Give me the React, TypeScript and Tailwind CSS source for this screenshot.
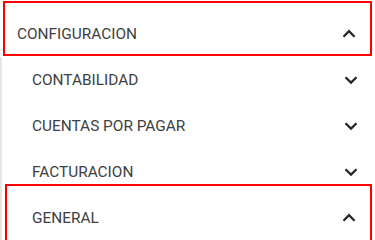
import React from "react";

const Chevron = ({ up }: { up?: boolean }) => (
  <svg width="24" height="24" viewBox="0 0 24 24" className="shrink-0" fill="#262626">
    {up ? (
      <path d="M12 7.6l-6.3 6.3 1.6 1.6 4.7-4.7 4.7 4.7 1.6-1.6z" />
    ) : (
      <path d="M16.7 8.4L12 13.1 7.3 8.4 5.7 10l6.3 6.3 6.3-6.3z" />
    )}
  </svg>
);

export default function App() {
  return (
    <div
      className="w-[375px] h-[240px] overflow-hidden bg-white text-[15.4px] leading-[20px] text-[#404040]"
      style={{ fontFamily: "Roboto, 'Liberation Sans', sans-serif" }}
    >
      <div className="mt-[1px] mx-[3px] h-[55px] border-2 border-[#ff0000] flex items-center justify-between pl-[12px] pr-[9px] pt-[10px]">
        <span>CONFIGURACION</span>
        <Chevron up />
      </div>
      <div className="mt-[1px] border-l-2 border-[#e6e6e6] h-[200px]">
        <div className="h-[46px] flex items-center justify-between pl-[30px] pr-[12px]">
          <span>CONTABILIDAD</span>
          <Chevron />
        </div>
        <div className="h-[46px] flex items-center justify-between pl-[30px] pr-[12px]">
          <span>CUENTAS POR PAGAR</span>
          <Chevron />
        </div>
        <div className="h-[35px] flex items-start justify-between pl-[30px] pr-[12px] pt-[13px]">
          <span>FACTURACION</span>
          <div className="-mt-[2px]">
            <Chevron />
          </div>
        </div>
        <div className="ml-[3px] mr-[3px] h-[70px] border-2 border-[#ff0000] flex items-start justify-between pl-[25px] pr-[9px] pt-[22px]">
          <span>GENERAL</span>
          <div className="-mt-[2px]">
            <Chevron up />
          </div>
        </div>
      </div>
    </div>
  );
}
